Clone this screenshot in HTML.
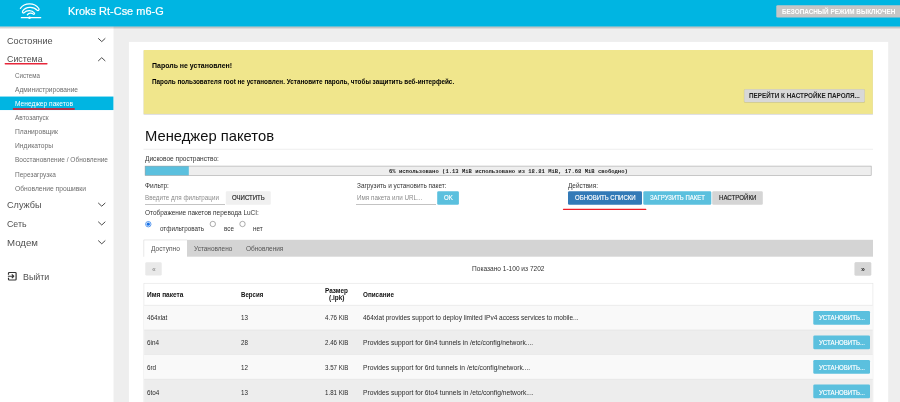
<!DOCTYPE html>
<html lang="ru">
<head>
<meta charset="utf-8">
<title>Kroks Rt-Cse m6-G - Менеджер пакетов - LuCI</title>
<style>
html,body{margin:0;padding:0}
body{width:900px;height:402px;overflow:hidden;position:relative;background:#eeeeee;font-family:"Liberation Sans",sans-serif;}
#bg{position:absolute;left:0;top:0;display:block}
#tx{position:absolute;left:0;top:0;width:900px;height:402px;z-index:10;will-change:transform}
.t{position:absolute;white-space:nowrap;display:block;transform-origin:0 50%}
</style>
</head>
<body>
<svg id="bg" width="900" height="402" viewBox="0 0 900 402">
<defs>
<linearGradient id="hsh" x1="0" y1="0" x2="0" y2="1"><stop offset="0" stop-color="#000" stop-opacity=".27"/><stop offset="1" stop-color="#000" stop-opacity="0"/></linearGradient>
</defs>
<rect x="0" y="0" width="900" height="402" fill="#eeeeee"/>
<!-- sidebar -->
<rect x="0" y="0" width="113.5" height="402" fill="#ffffff"/>
<rect x="0" y="96.55" width="113.4" height="13.5" fill="#00b5e2"/>
<!-- card -->
<rect x="128.9" y="41.9" width="759.3" height="362" fill="#ffffff"/>
<!-- alert -->
<rect x="143.5" y="50.4" width="729.5" height="64.3" rx=".4" fill="#334" opacity=".2"/>
<rect x="143.7" y="50" width="729.1" height="63.9" fill="#f0e68c"/>
<!-- header -->
<rect x="0" y="26.4" width="900" height="3" fill="url(#hsh)"/>
<rect x="0" y="0" width="900" height="26.5" fill="#00b5e2"/>
<rect x="776.3" y="5.2" width="130" height="12.4" rx="1.4" fill="#c6c6c6"/>
<!-- logo -->
<g fill="none" stroke="#fff" stroke-width="1.25" stroke-linecap="round" stroke-linejoin="round">
<path d="M20.4 8.4 C24.5 2.4 34.5 2.4 38.8 8.5 C39.6 9.8 38.4 11.1 37.2 10.3 C33.5 6.4 26 6.4 22.6 11.2 C22 12.5 23.2 13.5 24.2 12.7 C26.5 10 32.2 10 34.4 13 C34.9 14 34 14.7 33.3 14.1 C31.8 12.7 28.7 12.8 27.3 14.8"/>
<path d="M21.3 17.7 H40.7" stroke-width="1.2"/>
</g>
<circle cx="29.5" cy="17.7" r="1.25" fill="#fff"/>
<!-- chevrons -->
<g fill="none" stroke="#404040" stroke-width="0.95">
<path d="M98.2 38.3 L101.75 41.6 L105.3 38.3"/>
<path d="M98.2 61 L101.75 57.7 L105.3 61"/>
<path d="M98.2 202.9 L101.75 206.2 L105.3 202.9"/>
<path d="M98.2 221.7 L101.75 225 L105.3 221.7"/>
<path d="M98.2 240.5 L101.75 243.8 L105.3 240.5"/>
</g>
<!-- logout icon -->
<g fill="none" stroke="#333" stroke-width="1.2" stroke-linejoin="round">
<path d="M8.5 274.7 V273.3 Q8.5 272.5 9.3 272.5 H15.3 Q16.1 272.5 16.1 273.3 V279.2 Q16.1 280 15.3 280 H9.3 Q8.5 280 8.5 279.2 V277.8"/>
<path d="M7.9 276.25 H13.6 M11.8 274.3 L13.8 276.25 L11.8 278.2" stroke-width="1.05"/>
</g>
<!-- red annotation lines -->
<g stroke-linecap="round" fill="none">
<path d="M5.3 63.75 H46.9" stroke="#e8263a" stroke-width="1.4"/>
<path d="M12.9 108.95 H74.7" stroke="#af344c" stroke-width="2" stroke-linecap="butt"/>
<path d="M563.5 209.3 H645.8" stroke="#ee1c25" stroke-width="1.3"/>
</g>
<!-- alert button -->
<rect x="743.9" y="89" width="121.1" height="13.8" rx="1.6" fill="#000" opacity=".16"/>
<rect x="744.2" y="89.2" width="120.5" height="13.1" rx="1.3" fill="#d8d8d8"/>
<!-- hr -->
<rect x="143.5" y="148.8" width="729.5" height=".8" fill="#e9e9e9"/>
<!-- progress -->
<rect x="145.1" y="166.1" width="726.1" height="9.3" fill="#eeeeee"/>
<rect x="145.1" y="166.1" width="43.7" height="9.3" fill="#5bc0de"/>
<rect x="145.1" y="166.1" width="726.1" height="9.3" fill="none" stroke="#8c8c8c" stroke-opacity=".75" stroke-width=".6"/>
<!-- inputs + buttons -->
<rect x="145" y="204.2" width="80" height=".7" fill="#aaaaaa"/>
<rect x="356" y="204.2" width="80" height=".7" fill="#aaaaaa"/>
<rect x="225.8" y="191.3" width="45" height="13.4" rx="1.3" fill="#f0f0f0"/>
<rect x="437.2" y="191.3" width="21.7" height="13.4" rx="1.3" fill="#5bc0de"/>
<rect x="568" y="191.3" width="74" height="13.4" rx="1.3" fill="#337ab7"/>
<rect x="643.3" y="191.3" width="68" height="13.4" rx="1.3" fill="#5bc0de"/>
<rect x="712.2" y="191.3" width="50.6" height="13.4" rx="1.3" fill="#d5d5d5"/>
<!-- radios -->
<circle cx="148.3" cy="224.2" r="2.7" fill="#fff" stroke="#1a73e8" stroke-width=".7"/>
<circle cx="148.3" cy="224.2" r="1.6" fill="#1a73e8"/>
<circle cx="212.8" cy="224" r="2.7" fill="#fff" stroke="#777" stroke-width=".6"/>
<circle cx="242.5" cy="224" r="2.7" fill="#fff" stroke="#777" stroke-width=".6"/>
<!-- tabs -->
<rect x="143.6" y="239.8" width="729.4" height="16.9" fill="#d4d4d4"/>
<rect x="143.6" y="239.8" width="43.4" height="17.6" fill="#ffffff"/>
<path d="M143.9 256.7 V240.1 H187" fill="none" stroke="#e2e2e2" stroke-width=".6"/>
<!-- pager -->
<rect x="145.3" y="262.2" width="16.4" height="13.3" rx="1.3" fill="#e9e9e9"/>
<rect x="854.4" y="261.9" width="17" height="13.9" rx="1.6" fill="#000" opacity=".1"/>
<rect x="854.7" y="262.2" width="16.4" height="13.3" rx="1.3" fill="#d6d6d6"/>
<!-- table -->
<rect x="143.9" y="283.3" width="729" height="125" fill="#ffffff" stroke="#e6e6e6" stroke-width=".7"/>
<rect x="144.2" y="305.2" width="728.4" height="24.8" fill="#f9f9f9"/>
<rect x="144.2" y="330" width="728.4" height="24.4" fill="#ededed"/>
<rect x="144.2" y="354.4" width="728.4" height="24.6" fill="#f9f9f9"/>
<rect x="144.2" y="379.2" width="728.4" height="24.6" fill="#ededed"/>
<g fill="#e2e2e2">
<rect x="144.2" y="304.9" width="728.4" height=".6"/>
<rect x="144.2" y="329.7" width="728.4" height=".6"/>
<rect x="144.2" y="354.1" width="728.4" height=".6"/>
<rect x="144.2" y="378.9" width="728.4" height=".6"/>
</g>
<g fill="#5bc0de">
<rect x="813.3" y="310.9" width="56.7" height="13.8" rx="1.3"/>
<rect x="813.3" y="335.4" width="56.7" height="13.8" rx="1.3"/>
<rect x="813.3" y="360" width="56.7" height="13.8" rx="1.3"/>
<rect x="813.3" y="384.5" width="56.7" height="13.8" rx="1.3"/>
</g>
</svg>
<div id="tx">
<span class="t" style="left:68.30px;top:0px;font:400 11.2px/22.4px 'Liberation Sans', sans-serif;color:#fff;transform:scaleX(0.9806);-webkit-text-stroke:.2px #fff;">Kroks Rt-Cse m6-G</span>
<span class="t" style="left:782.00px;top:6px;font:700 6.4px/12.8px 'Liberation Sans', sans-serif;color:#fff;transform:scaleX(0.9958);">БЕЗОПАСНЫЙ РЕЖИМ ВЫКЛЮЧЕН</span>
<span class="t" style="left:7.40px;top:31px;font:400 9.8px/19.6px 'Liberation Sans', sans-serif;color:#505050;transform:scaleX(0.9327);">Состояние</span>
<span class="t" style="left:7.40px;top:49px;font:400 9.8px/19.6px 'Liberation Sans', sans-serif;color:#505050;transform:scaleX(0.9020);">Система</span>
<span class="t" style="left:7.40px;top:195px;font:400 9.8px/19.6px 'Liberation Sans', sans-serif;color:#505050;transform:scaleX(0.9320);">Службы</span>
<span class="t" style="left:7.40px;top:214px;font:400 9.8px/19.6px 'Liberation Sans', sans-serif;color:#505050;transform:scaleX(0.8992);">Сеть</span>
<span class="t" style="left:7.40px;top:233px;font:400 9.8px/19.6px 'Liberation Sans', sans-serif;color:#505050;transform:scaleX(0.9839);">Модем</span>
<span class="t" style="left:23.00px;top:267px;font:400 9.8px/19.6px 'Liberation Sans', sans-serif;color:#505050;transform:scaleX(0.9064);">Выйти</span>
<span class="t" style="left:15.00px;top:69px;font:400 6.95px/13.9px 'Liberation Sans', sans-serif;color:#6e6e6e;transform:scaleX(0.8944);">Система</span>
<span class="t" style="left:15.00px;top:83px;font:400 6.95px/13.9px 'Liberation Sans', sans-serif;color:#6e6e6e;transform:scaleX(0.9523);">Администрирование</span>
<span class="t" style="left:15.00px;top:97px;font:400 6.95px/13.9px 'Liberation Sans', sans-serif;color:#fff;transform:scaleX(0.9572);">Менеджер пакетов</span>
<span class="t" style="left:15.00px;top:111px;font:400 6.95px/13.9px 'Liberation Sans', sans-serif;color:#6e6e6e;transform:scaleX(0.9431);">Автозапуск</span>
<span class="t" style="left:15.00px;top:125px;font:400 6.95px/13.9px 'Liberation Sans', sans-serif;color:#6e6e6e;transform:scaleX(0.9636);">Планировщик</span>
<span class="t" style="left:15.00px;top:139px;font:400 6.95px/13.9px 'Liberation Sans', sans-serif;color:#6e6e6e;transform:scaleX(0.9635);">Индикаторы</span>
<span class="t" style="left:15.00px;top:153px;font:400 6.95px/13.9px 'Liberation Sans', sans-serif;color:#6e6e6e;transform:scaleX(0.9403);">Восстановление / Обновление</span>
<span class="t" style="left:15.00px;top:168px;font:400 6.95px/13.9px 'Liberation Sans', sans-serif;color:#6e6e6e;transform:scaleX(0.9386);">Перезагрузка</span>
<span class="t" style="left:15.00px;top:182px;font:400 6.95px/13.9px 'Liberation Sans', sans-serif;color:#6e6e6e;transform:scaleX(0.9660);">Обновление прошивки</span>
<span class="t" style="left:151.80px;top:59px;font:700 6.9px/13.8px 'Liberation Sans', sans-serif;color:#000;transform:scaleX(1.0105);">Пароль не установлен!</span>
<span class="t" style="left:151.80px;top:75px;font:700 6.9px/13.8px 'Liberation Sans', sans-serif;color:#000;transform:scaleX(0.9232);">Пароль пользователя root не установлен. Установите пароль, чтобы защитить веб-интерфейс.</span>
<span class="t" style="left:749.20px;top:89px;font:700 6.5px/13.0px 'Liberation Sans', sans-serif;color:#222;transform:scaleX(0.9758);">ПЕРЕЙТИ К НАСТРОЙКЕ ПАРОЛЯ...</span>
<span class="t" style="left:144.70px;top:121px;font:400 15.0px/30.0px 'Liberation Sans', sans-serif;color:#111;transform:scaleX(0.9847);">Менеджер пакетов</span>
<span class="t" style="left:145.30px;top:152px;font:400 6.8px/13.6px 'Liberation Sans', sans-serif;color:#333;transform:scaleX(0.9672);">Дисковое пространство:</span>
<span class="t" style="left:388.70px;top:166px;font:700 5.7px/11.4px 'Liberation Mono', monospace;color:#222;transform:scaleX(0.9717);">6% использовано (1.13 MiB использовано из 18.81 MiB, 17.68 MiB свободно)</span>
<span class="t" style="left:145.30px;top:179px;font:400 6.8px/13.6px 'Liberation Sans', sans-serif;color:#333;transform:scaleX(0.9663);">Фильтр:</span>
<span class="t" style="left:145.30px;top:191px;font:400 6.6px/13.2px 'Liberation Sans', sans-serif;color:#8c8c8c;transform:scaleX(0.9499);">Введите для фильтрации</span>
<span class="t" style="left:232.00px;top:191px;font:400 6.6px/13.2px 'Liberation Sans', sans-serif;color:#222;transform:scaleX(0.9135);-webkit-text-stroke:.15px #222;">ОЧИСТИТЬ</span>
<span class="t" style="left:356.70px;top:179px;font:400 6.8px/13.6px 'Liberation Sans', sans-serif;color:#333;transform:scaleX(0.9461);">Загрузить и установить пакет:</span>
<span class="t" style="left:356.70px;top:191px;font:400 6.6px/13.2px 'Liberation Sans', sans-serif;color:#8c8c8c;transform:scaleX(0.9533);">Имя пакета или URL...</span>
<span class="t" style="left:444.20px;top:191px;font:400 6.6px/13.2px 'Liberation Sans', sans-serif;color:#fff;transform:scaleX(0.9233);-webkit-text-stroke:.15px #fff;">OK</span>
<span class="t" style="left:568.00px;top:179px;font:400 6.8px/13.6px 'Liberation Sans', sans-serif;color:#333;transform:scaleX(0.9472);">Действия:</span>
<span class="t" style="left:574.70px;top:191px;font:400 6.6px/13.2px 'Liberation Sans', sans-serif;color:#fff;transform:scaleX(0.9145);-webkit-text-stroke:.15px #fff;">ОБНОВИТЬ СПИСКИ</span>
<span class="t" style="left:649.70px;top:191px;font:400 6.6px/13.2px 'Liberation Sans', sans-serif;color:#fff;transform:scaleX(0.9049);-webkit-text-stroke:.15px #fff;">ЗАГРУЗИТЬ ПАКЕТ</span>
<span class="t" style="left:718.80px;top:191px;font:400 6.6px/13.2px 'Liberation Sans', sans-serif;color:#222;transform:scaleX(0.9281);-webkit-text-stroke:.15px #222;">НАСТРОЙКИ</span>
<span class="t" style="left:145.30px;top:206px;font:400 6.8px/13.6px 'Liberation Sans', sans-serif;color:#333;transform:scaleX(0.9526);">Отображение пакетов перевода LuCI:</span>
<span class="t" style="left:159.70px;top:222px;font:400 6.8px/13.6px 'Liberation Sans', sans-serif;color:#333;transform:scaleX(0.9242);">отфильтровать</span>
<span class="t" style="left:224.20px;top:222px;font:400 6.8px/13.6px 'Liberation Sans', sans-serif;color:#333;transform:scaleX(0.9200);">все</span>
<span class="t" style="left:253.00px;top:222px;font:400 6.8px/13.6px 'Liberation Sans', sans-serif;color:#333;transform:scaleX(0.9403);">нет</span>
<span class="t" style="left:150.80px;top:242px;font:400 6.8px/13.6px 'Liberation Sans', sans-serif;color:#555;transform:scaleX(0.9740);">Доступно</span>
<span class="t" style="left:193.70px;top:242px;font:400 6.8px/13.6px 'Liberation Sans', sans-serif;color:#555;transform:scaleX(0.9490);">Установлено</span>
<span class="t" style="left:245.90px;top:242px;font:400 6.8px/13.6px 'Liberation Sans', sans-serif;color:#555;transform:scaleX(0.9551);">Обновления</span>
<span class="t" style="left:151.80px;top:263px;font:700 7px/14px 'Liberation Sans', sans-serif;color:#9a9a9a;transform:scaleX(0.9728);">«</span>
<span class="t" style="left:860.90px;top:263px;font:700 7px/14px 'Liberation Sans', sans-serif;color:#333;transform:scaleX(1.0240);">»</span>
<span class="t" style="left:471.70px;top:262px;font:400 6.8px/13.6px 'Liberation Sans', sans-serif;color:#333;transform:scaleX(0.9665);">Показано 1-100 из 7202</span>
<span class="t" style="left:146.90px;top:288px;font:700 6.6px/13.2px 'Liberation Sans', sans-serif;color:#111;transform:scaleX(0.9909);">Имя пакета</span>
<span class="t" style="left:240.80px;top:288px;font:700 6.6px/13.2px 'Liberation Sans', sans-serif;color:#111;transform:scaleX(0.9238);">Версия</span>
<span class="t" style="left:325.00px;top:284px;font:700 6.6px/13.2px 'Liberation Sans', sans-serif;color:#111;transform:scaleX(0.9684);">Размер</span>
<span class="t" style="left:328.70px;top:291px;font:700 6.6px/13.2px 'Liberation Sans', sans-serif;color:#111;transform:scaleX(0.9832);">(.ipk)</span>
<span class="t" style="left:362.80px;top:288px;font:700 6.6px/13.2px 'Liberation Sans', sans-serif;color:#111;transform:scaleX(0.9567);">Описание</span>
<span class="t" style="left:147.20px;top:311px;font:400 6.8px/13.6px 'Liberation Sans', sans-serif;color:#2a2a2a;transform:scaleX(0.9260);">464xlat</span>
<span class="t" style="left:240.80px;top:311px;font:400 6.8px/13.6px 'Liberation Sans', sans-serif;color:#2a2a2a;transform:scaleX(0.9200);">13</span>
<span class="t" style="left:324.70px;top:311px;font:400 6.8px/13.6px 'Liberation Sans', sans-serif;color:#2a2a2a;transform:scaleX(0.9065);">4.76 KiB</span>
<span class="t" style="left:362.80px;top:311px;font:400 6.8px/13.6px 'Liberation Sans', sans-serif;color:#2a2a2a;transform:scaleX(0.9555);">464xlat provides support to deploy limited IPv4 access services to mobile...</span>
<span class="t" style="left:818.70px;top:311px;font:400 6.6px/13.2px 'Liberation Sans', sans-serif;color:#fff;transform:scaleX(0.9232);-webkit-text-stroke:.15px #fff;">УСТАНОВИТЬ...</span>
<span class="t" style="left:147.20px;top:336px;font:400 6.8px/13.6px 'Liberation Sans', sans-serif;color:#2a2a2a;transform:scaleX(0.9332);">6in4</span>
<span class="t" style="left:240.80px;top:336px;font:400 6.8px/13.6px 'Liberation Sans', sans-serif;color:#2a2a2a;transform:scaleX(0.9200);">28</span>
<span class="t" style="left:324.70px;top:336px;font:400 6.8px/13.6px 'Liberation Sans', sans-serif;color:#2a2a2a;transform:scaleX(0.9065);">2.46 KiB</span>
<span class="t" style="left:362.80px;top:336px;font:400 6.8px/13.6px 'Liberation Sans', sans-serif;color:#2a2a2a;transform:scaleX(0.9857);">Provides support for 6in4 tunnels in /etc/config/network....</span>
<span class="t" style="left:818.70px;top:336px;font:400 6.6px/13.2px 'Liberation Sans', sans-serif;color:#fff;transform:scaleX(0.9232);-webkit-text-stroke:.15px #fff;">УСТАНОВИТЬ...</span>
<span class="t" style="left:147.20px;top:361px;font:400 6.8px/13.6px 'Liberation Sans', sans-serif;color:#2a2a2a;transform:scaleX(0.9259);">6rd</span>
<span class="t" style="left:240.80px;top:361px;font:400 6.8px/13.6px 'Liberation Sans', sans-serif;color:#2a2a2a;transform:scaleX(0.9200);">12</span>
<span class="t" style="left:324.70px;top:361px;font:400 6.8px/13.6px 'Liberation Sans', sans-serif;color:#2a2a2a;transform:scaleX(0.9065);">3.57 KiB</span>
<span class="t" style="left:362.80px;top:361px;font:400 6.8px/13.6px 'Liberation Sans', sans-serif;color:#2a2a2a;transform:scaleX(0.9856);">Provides support for 6rd tunnels in /etc/config/network....</span>
<span class="t" style="left:818.70px;top:361px;font:400 6.6px/13.2px 'Liberation Sans', sans-serif;color:#fff;transform:scaleX(0.9232);-webkit-text-stroke:.15px #fff;">УСТАНОВИТЬ...</span>
<span class="t" style="left:147.20px;top:386px;font:400 6.8px/13.6px 'Liberation Sans', sans-serif;color:#2a2a2a;transform:scaleX(0.9294);">6to4</span>
<span class="t" style="left:240.80px;top:386px;font:400 6.8px/13.6px 'Liberation Sans', sans-serif;color:#2a2a2a;transform:scaleX(0.9200);">13</span>
<span class="t" style="left:324.70px;top:386px;font:400 6.8px/13.6px 'Liberation Sans', sans-serif;color:#2a2a2a;transform:scaleX(0.9065);">1.81 KiB</span>
<span class="t" style="left:362.80px;top:386px;font:400 6.8px/13.6px 'Liberation Sans', sans-serif;color:#2a2a2a;transform:scaleX(0.9864);">Provides support for 6to4 tunnels in /etc/config/network....</span>
<span class="t" style="left:818.70px;top:386px;font:400 6.6px/13.2px 'Liberation Sans', sans-serif;color:#fff;transform:scaleX(0.9232);-webkit-text-stroke:.15px #fff;">УСТАНОВИТЬ...</span>
</div>
</body>
</html>
